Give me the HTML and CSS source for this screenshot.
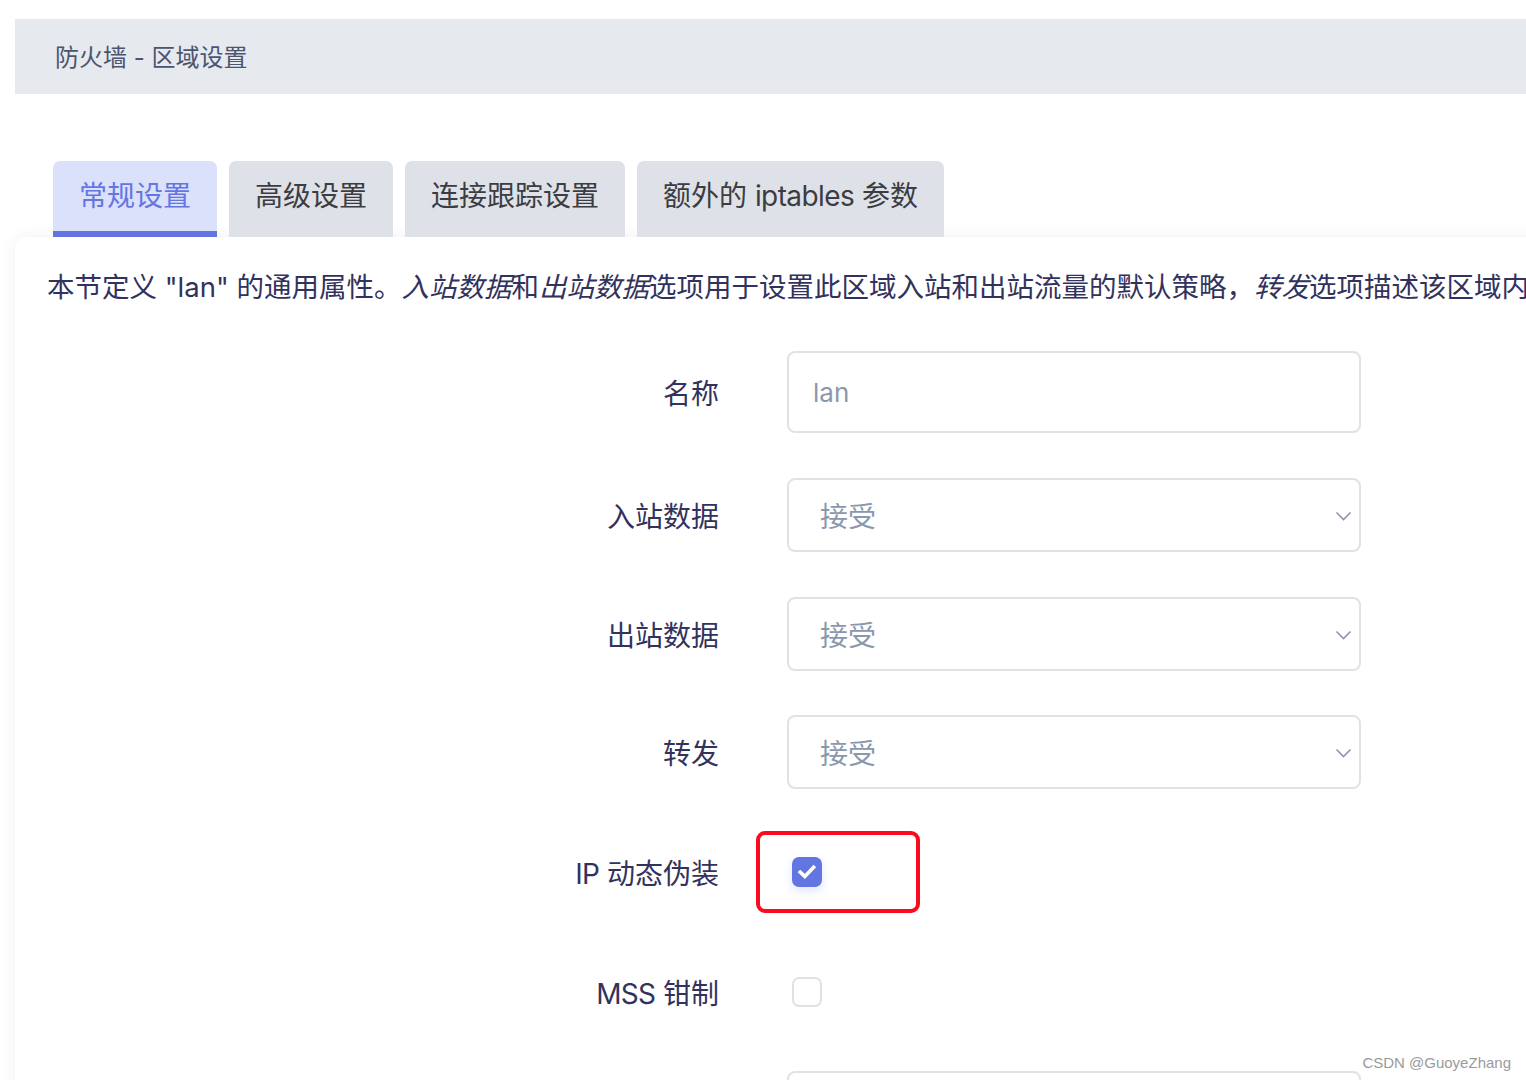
FILE: index.html
```html
<!DOCTYPE html>
<html lang="zh-CN">
<head>
<meta charset="utf-8">
<title>防火墙 - 区域设置</title>
<link rel="stylesheet" href="styles.css">
</head>
<body>
<div class="page">
  <div class="title-bar">防火墙 - 区域设置</div>

  <div class="tabs">
    <div class="tab active"><span>常规设置</span></div>
    <div class="tab"><span>高级设置</span></div>
    <div class="tab"><span>连接跟踪设置</span></div>
    <div class="tab"><span>额外的 <span class="latin">iptables</span> 参数</span></div>
  </div>

  <div class="card">
    <p class="desc">本节定义 "lan" 的通用属性。<em>入站数据</em>和<em>出站数据</em>选项用于设置此区域入站和出站流量的默认策略，<em>转发</em>选项描述该区域内不同网络之间的转发流量策略。</p>

    <div class="form">
      <div class="row row-name">
        <label class="label">名称</label>
        <div class="field"><div class="input">lan</div></div>
      </div>
      <div class="row">
        <label class="label">入站数据</label>
        <div class="field">
          <div class="select">接受
            <svg class="chev" viewBox="0 0 16 10" width="17" height="10"><path d="M1 1.5 L8 8.5 L15 1.5" fill="none" stroke="#8a98ad" stroke-width="1.6"/></svg>
          </div>
        </div>
      </div>
      <div class="row">
        <label class="label">出站数据</label>
        <div class="field">
          <div class="select">接受
            <svg class="chev" viewBox="0 0 16 10" width="17" height="10"><path d="M1 1.5 L8 8.5 L15 1.5" fill="none" stroke="#8a98ad" stroke-width="1.6"/></svg>
          </div>
        </div>
      </div>
      <div class="row">
        <label class="label">转发</label>
        <div class="field">
          <div class="select">接受
            <svg class="chev" viewBox="0 0 16 10" width="17" height="10"><path d="M1 1.5 L8 8.5 L15 1.5" fill="none" stroke="#8a98ad" stroke-width="1.6"/></svg>
          </div>
        </div>
      </div>
      <div class="row row-cb">
        <label class="label"><span class="latin">IP</span> 动态伪装</label>
        <div class="field">
          <span class="cb-wrap">
            <span class="checkbox checked">
              <svg viewBox="0 0 20 20" width="20" height="20"><path d="M3.2 10.2 L7.8 14.4 L16.6 5.4" fill="none" stroke="#fff" stroke-width="3.6" stroke-linecap="square" stroke-linejoin="miter"/></svg>
            </span>
            <span class="annot"></span>
          </span>
        </div>
      </div>
      <div class="row row-cb">
        <label class="label"><span class="latin">MSS</span> 钳制</label>
        <div class="field"><span class="checkbox"></span></div>
      </div>
      <div class="row">
        <label class="label"></label>
        <div class="field"><div class="input"></div></div>
      </div>
    </div>
  </div>
</div>
<div class="watermark">CSDN @GuoyeZhang</div>
</body>
</html>
```
FILE: styles.css
```css
html, body {
  margin: 0;
  padding: 0;
  overflow: hidden;
  background: #ffffff;
}
body {
  width: 1526px;
  height: 1080px;
  font-family: Inter, "Noto Sans CJK SC", "Noto Sans", sans-serif;
  color: #32325d;
}
.page {
  width: 1800px;
  padding-top: 19px;
}
.title-bar {
  margin-left: 15px;
  height: 75px;
  background: #e6e9ed;
  display: flex;
  align-items: center;
  padding-left: 40px;
  padding-bottom: 2px;
  font-size: 24px;
  color: #4a5571;
  box-sizing: border-box;
}
.tabs {
  display: flex;
  gap: 12px;
  margin-top: 67px;
  margin-left: 53px;
  height: 76px;
}
.tab {
  height: 76px;
  box-sizing: border-box;
  padding: 0 26px 10px;
  display: flex;
  align-items: center;
  font-size: 28px;
  color: #3b3d42;
  background: #dee2e8;
  border-radius: 7px 7px 0 0;
  white-space: nowrap;
}
.tab .latin {
  letter-spacing: -0.6px;
}
.tab.active {
  background: #dbe0fb;
  color: #6476e2;
  border-bottom: 6px solid #6174e0;
  padding-bottom: 4px;
}
.card {
  margin-left: 15px;
  background: #ffffff;
  border-radius: 12px 0 0 0;
  box-shadow: 0 0 16px rgba(40, 50, 80, 0.07);
  padding: 30px 0 0 32px;
  height: 900px;
}
.desc {
  margin: 0;
  font-size: 27.5px;
  line-height: 40px;
  white-space: nowrap;
  color: #32325d;
}
.desc em {
  font-style: italic;
}
.form {
  margin-top: 44px;
}
.row {
  display: flex;
  align-items: center;
  height: 74px;
  margin-bottom: 44.5px;
}
.row-name {
  height: 82px;
  margin-bottom: 45px;
}
.row-cb {
  height: 76px;
}
.label {
  width: 672px;
  text-align: right;
  font-size: 28px;
  color: #32325d;
  flex-shrink: 0;
}
.label .latin {
  letter-spacing: -0.8px;
}
.field {
  margin-left: 68px;
  display: flex;
  align-items: center;
}
.input, .select {
  width: 574px;
  box-sizing: border-box;
  border: 2px solid #dfe3e8;
  border-radius: 8px;
  background: #fff;
  color: #8a98ad;
  display: flex;
  align-items: center;
}
.input {
  height: 82px;
  padding-left: 24px;
  font-size: 26px;
}
.select {
  height: 74px;
  padding-left: 31px;
  font-size: 28px;
  position: relative;
}
.chev {
  position: absolute;
  right: 7px;
  top: 31px;
}
.cb-wrap {
  position: relative;
  display: inline-flex;
  margin-left: 5px;
}
.checkbox {
  width: 30px;
  height: 30px;
  box-sizing: border-box;
  border: 2px solid #dee2e6;
  border-radius: 7px;
  background: #fff;
  display: inline-flex;
  align-items: center;
  justify-content: center;
}
.field > .checkbox {
  margin-left: 5px;
}
.checkbox.checked {
  background: #6176e0;
  border-color: #6176e0;
  box-shadow: 0 4px 10px rgba(94, 114, 228, 0.18);
}
.annot {
  position: absolute;
  left: -36px;
  top: -26px;
  width: 164px;
  height: 82px;
  box-sizing: border-box;
  border: 4px solid #fb0b1f;
  border-radius: 9px;
}
.watermark {
  position: absolute;
  right: 15px;
  bottom: 9px;
  font-family: "Liberation Sans", "DejaVu Sans", sans-serif;
  font-size: 15px;
  color: #9a9a9a;
}
```
